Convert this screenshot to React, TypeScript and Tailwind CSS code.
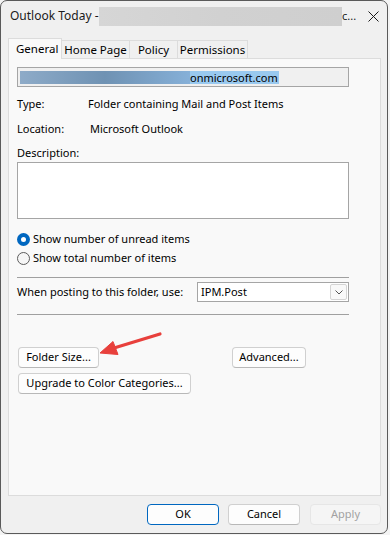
import React from 'react'

const font = { fontFamily: '"Noto Sans", "Open Sans", sans-serif' }

function Radio({ checked, label }: { checked?: boolean; label: string }) {
  return (
    <div className="flex items-center h-4 mt-[3px] first:mt-[12px]">
      {checked ? (
        <span className="w-[13px] h-[13px] rounded-full bg-[#0067c0] flex items-center justify-center">
          <span className="w-[5px] h-[5px] rounded-full bg-white" />
        </span>
      ) : (
        <span className="w-[13px] h-[13px] rounded-full border border-[#5c5c5c] bg-[#f6f6f6]" />
      )}
      <span className="ml-[3px]">{label}</span>
    </div>
  )
}

function Btn({ children, className = '' }: { children: React.ReactNode; className?: string }) {
  return (
    <div
      className={`h-[21px] flex items-center justify-center rounded-[4px] border border-[#d0d0d0] border-b-[#b8b8b8] bg-[#fdfdfd] ${className}`}
    >
      {children}
    </div>
  )
}

export default function App() {
  return (
    <div className="w-[390px] h-[535px] bg-[#f4f4f4] relative text-[11px] text-black" style={font}>
      {/* ventana */}
      <div className="w-[388px] h-[534px] bg-[#f0f0f0] border border-[#5a5a5a] rounded-[7px] flex flex-col">
        {/* barra de titulo */}
        <div className="h-[30px] flex items-center pl-[9px] text-[12px] text-[#1b1b1b] shrink-0">
          <span className="w-[89px] whitespace-pre">Outlook Today - </span>
          <div className="w-[243px] h-[19px] bg-gradient-to-r from-[#d6d6d6] via-[#d1d1d1] to-[#cfcfcf]" />
          <span className="text-[11px]">c...</span>
          <svg className="ml-auto mr-[8px]" width="11" height="11" viewBox="0 0 11 11">
            <path d="M0.5 0.5 L10.5 10.5 M10.5 0.5 L0.5 10.5" stroke="#1b1b1b" strokeWidth="1" />
          </svg>
        </div>

        {/* pestañas */}
        <div className="flex items-end ml-[7px] mt-[6px] h-[21px] shrink-0 text-[11.5px]">
          <div className="h-[21px] w-[54px] border border-b-0 border-[#dcdcdc] bg-[#f9f9f9] pl-[7px] pt-[1px] relative z-10 -mb-px">
            General
          </div>
          <div className="h-[18px] w-[68px] border-t border-r border-[#dcdcdc] flex items-center justify-center">
            Home Page
          </div>
          <div className="h-[18px] w-[48px] border-t border-r border-[#dcdcdc] flex items-center justify-center">
            Policy
          </div>
          <div className="h-[18px] w-[70px] border-t border-r border-[#dcdcdc] flex items-center justify-center">
            Permissions
          </div>
        </div>

        {/* panel */}
        <div className="ml-[7px] w-[373px] h-[438px] border border-[#dcdcdc] bg-[#f9f9f9] relative shrink-0">
          <div className="flex flex-col pl-[8px] pt-[8px] w-[340px]">
            <div className="h-[20px] border border-[#a5a5a5] bg-[#f0f0f0] flex items-center pl-[2px]">
              <div className="h-[13px] w-[170px] bg-gradient-to-r from-[#8eabc8] via-[#6f92b3] to-[#86b0d8]" />
              <span className="h-[13px] bg-[#99c9ef] leading-[13px] pr-[1px]">onmicrosoft.com</span>
            </div>

            <div className="flex h-4 items-center mt-[9px]">
              <span className="w-[71px]">Type:</span>
              <span>Folder containing Mail and Post Items</span>
            </div>
            <div className="flex h-4 items-center mt-[9px]">
              <span className="w-[73px]">Location:</span>
              <span>Microsoft Outlook</span>
            </div>
            <div className="flex h-4 items-center mt-[8px]">Description:</div>
            <div className="mt-[1px] h-[57px] border border-[#a5a5a5] bg-white" />

            <div className="flex flex-col">
              <Radio checked label="Show number of unread items" />
              <Radio label="Show total number of items" />
            </div>

            <div className="mt-[11px] h-px bg-[#a0a0a0]" />

            <div className="mt-[4px] h-[20px] flex items-center">
              <span className="w-[180px] whitespace-nowrap">When posting to this folder, use:</span>
              <div className="w-[152px] h-[20px] shrink-0 border border-[#a5a5a5] bg-white flex items-center pl-[3px]">
                <span>IPM.Post</span>
                <div className="ml-auto mr-[1px] w-[17px] h-[16px] border border-[#d5d5d5] rounded-[2px] bg-[#f9f9f9] flex items-center justify-center">
                  <svg width="8" height="5" viewBox="0 0 8 5">
                    <path d="M0.5 0.5 L4 4 L7.5 0.5" fill="none" stroke="#555" strokeWidth="1" />
                  </svg>
                </div>
              </div>
            </div>

            <div className="mt-[12px] h-px bg-[#a0a0a0]" />

            <div className="mt-[32px] flex ml-[1px]">
              <Btn className="w-[81px]">Folder Size...</Btn>
              <Btn className="w-[74px] ml-[133px]">Advanced...</Btn>
            </div>
            <div className="mt-[5px] ml-[1px]">
              <Btn className="w-[173px] h-[20px]">Upgrade to Color Categories...</Btn>
            </div>
          </div>

          {/* flecha roja */}
          <svg className="absolute left-[64px] top-[267px]" width="95" height="40" viewBox="0 0 95 40">
            <path d="M87 8 L41 22" stroke="#e8403c" strokeWidth="3.2" strokeLinecap="round" />
            <path d="M27 27 L40 15.5 L45 28.5 Z" fill="#e8403c" stroke="#e8403c" strokeWidth="1" strokeLinejoin="round" />
          </svg>
        </div>

        {/* botones inferiores */}
        <div className="flex justify-end pr-[6px] mt-[8px]">
          <Btn className="w-[72px] h-[21px] !border-[#0067c0]">OK</Btn>
          <Btn className="w-[72px] h-[21px] ml-[9px]">Cancel</Btn>
          <div className="w-[71px] h-[21px] ml-[10px] rounded-[4px] border border-[#e6e6e6] bg-[#f5f5f5] text-[#a2a2a2] flex items-center justify-center">
            Apply
          </div>
        </div>
      </div>
    </div>
  )
}
